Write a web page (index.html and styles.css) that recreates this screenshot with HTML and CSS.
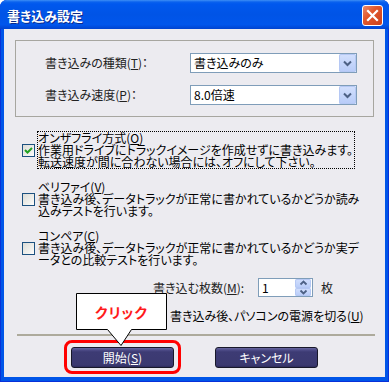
FILE: index.html
```html
<!DOCTYPE html>
<html lang="ja">
<head>
<meta charset="utf-8">
<title>書き込み設定</title>
<link rel="stylesheet" href="styles.css">
</head>
<body>
<div class="window">
  <div class="titlebar">
    <span class="title">書き込み設定</span>
    <span class="close"><svg width="13" height="13" viewBox="0 0 13 13"><path d="M2 2 L11 11 M11 2 L2 11" stroke="#fff" stroke-width="2.2" stroke-linecap="square"/></svg></span>
  </div>
  <div class="client">
    <div class="group">
      <span class="label">書き込みの種類(<u>T</u>)：</span>
      <div class="combo"><span class="value">書き込みのみ</span><span class="drop"><svg width="17" height="18" viewBox="0 0 17 18"><path d="M5 7.5 L8.5 11 L12 7.5" fill="none" stroke="#4D6185" stroke-width="2"/></svg></span></div>
      <span class="label">書き込み速度(<u>P</u>)：</span>
      <div class="combo"><span class="value">8.0倍速</span><span class="drop"><svg width="17" height="18" viewBox="0 0 17 18"><path d="M5 7.5 L8.5 11 L12 7.5" fill="none" stroke="#4D6185" stroke-width="2"/></svg></span></div>
    </div>

    <div class="options">
      <div class="option">
        <span class="check"><svg width="11" height="11" viewBox="0 0 11 11"><path d="M2 5 L4.5 7.5 L9 3" fill="none" stroke="#21A121" stroke-width="2"/></svg></span>
        <div class="desc focus">
          <div>オンザフライ方式(<u>O</u>)</div>
          <div>作業用ドライブにトラックイメージを作成せずに書き込みます。</div>
          <div>転送速度が間に合わない場合には、オフにして下さい。</div>
        </div>
      </div>
      <div class="option">
        <span class="check"></span>
        <div class="desc">
          <div>ベリファイ(<u>V</u>)</div>
          <div>書き込み後、データトラックが正常に書かれているかどうか読み</div>
          <div>込みテストを行います。</div>
        </div>
      </div>
      <div class="option">
        <span class="check"></span>
        <div class="desc">
          <div>コンペア(<u>C</u>)</div>
          <div>書き込み後、データトラックが正常に書かれているかどうか実デ</div>
          <div>ータとの比較テストを行います。</div>
        </div>
      </div>
    </div>

    <div class="count-row">
      <span class="count-label">書き込む枚数(<u>M</u>):</span>
      <div class="spin">
        <span class="spin-value">1</span>
        <span class="spin-btns">
          <span class="spin-btn"><svg width="15" height="8" viewBox="0 0 15 8"><path d="M4.5 5.5 L7.5 2.5 L10.5 5.5" fill="none" stroke="#4D6185" stroke-width="1.8"/></svg></span>
          <span class="spin-btn"><svg width="15" height="8" viewBox="0 0 15 8"><path d="M4.5 2.5 L7.5 5.5 L10.5 2.5" fill="none" stroke="#4D6185" stroke-width="1.8"/></svg></span>
        </span>
      </div>
      <span class="unit">枚</span>
    </div>

    <div class="shutdown-row">
      <span class="check"></span>
      <span>書き込み後、パソコンの電源を切る(<u>U</u>)</span>
    </div>

    <div class="sep"></div>

    <div class="buttons">
      <button class="btn">開始(<u>S</u>)</button>
      <button class="btn">キャンセル</button>
    </div>

    <div class="highlight"></div>
    <div class="callout">
      <svg width="92" height="54" viewBox="0 0 92 54"><path d="M0.5 0.5 H90.5 V36.5 H55.5 L45 52.5 L31.5 36.5 H0.5 Z" fill="#fff" stroke="#000" stroke-width="1"/></svg>
      <span class="callout-text">クリック</span>
    </div>
  </div>
</div>
</body>
</html>
```

FILE: styles.css
```css
* { box-sizing: border-box; }
html, body { margin: 0; padding: 0; }
body {
  width: 389px;
  height: 382px;
  overflow: hidden;
  background: #fff;
  font-family: "Noto Sans CJK JP", "Noto Sans", sans-serif;
  font-size: 12px;
  font-feature-settings: "palt" 1;
  color: #000;
}
u { text-decoration: underline; text-underline-offset: 1px; }

.window {
  width: 389px;
  height: 382px;
  display: flex;
  flex-direction: column;
  background: #0055E8;
  border-radius: 7px 7px 0 0;
  box-shadow: inset 0 0 0 1px #0831D9;
}

.titlebar {
  height: 29px;
  flex: none;
  display: flex;
  align-items: center;
  justify-content: space-between;
  padding: 0 6px 0 7px;
  border-radius: 7px 7px 0 0;
  background: linear-gradient(to bottom, #3D8FF5 0, #0A62EE 2px, #0058EE 4px, #0054E6 50%, #0056EC 85%, #0043CF 100%);
}
.title {
  color: #fff;
  font-weight: bold;
  font-size: 13px;
  line-height: 1;
  text-shadow: 1px 1px 0 #0B2A8C;
  margin-top: 1px;
}
.close {
  width: 21px;
  height: 21px;
  display: flex;
  align-items: center;
  justify-content: center;
  border: 1px solid #fff;
  border-radius: 3px;
  background: linear-gradient(135deg, #E98B6C 0, #E2572C 40%, #C9401C 100%);
  margin-top: 1px;
}

.client {
  position: relative;
  flex: 1;
  margin: 0 4px 5px 4px;
  background: #ECEBF0;
  padding-top: 11px;
}

.group {
  margin-left: 11px;
  width: 359px;
  border: 1px solid #A7A6A0;
  padding: 12px 0 11px 29px;
  display: grid;
  grid-template-columns: 145px 167px;
  row-gap: 12px;
  align-items: center;
}
.label { color: #222; line-height: 20px; white-space: nowrap; }
.combo {
  height: 20px;
  border: 1px solid #7F9DB9;
  background: #fff;
  display: flex;
  align-items: center;
  justify-content: space-between;
  padding-left: 3px;
}
.combo .value { line-height: 18px; }
.drop {
  width: 17px;
  height: 18px;
  border-radius: 2px;
  background: linear-gradient(to bottom, #D3E0FD, #B7CBF8);
  box-shadow: inset 0 0 0 1px #B5C8F4;
  display: flex;
}

.options {
  margin-top: 14px;
  padding-left: 18px;
  display: flex;
  flex-direction: column;
  gap: 11px;
}
.option { display: flex; align-items: center; }
.check {
  width: 13px;
  height: 13px;
  flex: none;
  border: 1px solid #1C5180;
  background: linear-gradient(135deg, #DCDCD7 0, #F2F2EF 70%, #fff 100%);
  margin-right: 2px;
  display: flex;
  align-items: center;
  justify-content: center;
}
.desc {
  border: 1px dotted transparent;
  line-height: 12px;
  white-space: nowrap;
  padding-right: 1px;
}
.desc > div { height: 12px; }
.desc.focus { border-color: #000; }

.count-row {
  margin-top: 11px;
  padding-left: 149px;
  height: 19px;
  display: flex;
  align-items: center;
}
.count-label { width: 105px; color: #222; white-space: nowrap; }
.spin {
  width: 55px;
  height: 19px;
  border: 1px solid #7F9DB9;
  background: #fff;
  display: flex;
  justify-content: space-between;
  padding: 0 1px 0 3px;
}
.spin-value { line-height: 17px; }
.spin-btns { display: flex; flex-direction: column; width: 16px; }
.spin-btn {
  height: 8.5px;
  display: flex;
  align-items: center;
  justify-content: center;
  border-radius: 2px;
  background: linear-gradient(to bottom, #D3E0FD, #B7CBF8);
  box-shadow: inset 0 0 0 1px #B5C8F4;
  overflow: hidden;
}
.unit { margin-left: 8px; color: #222; }

.shutdown-row {
  margin-top: 12px;
  padding-left: 149px;
  height: 13px;
  display: flex;
  align-items: center;
  line-height: 13px;
  white-space: nowrap;
}
.shutdown-row .check { margin-right: 4px; }

.sep {
  margin: 12px 0 0 13px;
  width: 358px;
  height: 2px;
  background: #ADAA9C;
}

.buttons {
  margin-top: 11px;
  padding-left: 67px;
  display: flex;
  gap: 41px;
}
.btn {
  width: 103px;
  height: 21px;
  padding: 0;
  border: 1px solid #18182A;
  border-radius: 3px;
  background: linear-gradient(to bottom, #6866A0 0, #4E4C88 2px, #3D3B74 4px, #3B3970 90%, #2E2C5C 100%);
  color: #fff;
  font-family: inherit;
  font-size: 12px;
  font-feature-settings: "palt" 1;
  line-height: 19px;
}

.highlight {
  position: absolute;
  left: 60px;
  top: 311px;
  width: 117px;
  height: 34px;
  border: 3px solid #FF0000;
  border-radius: 8px;
}
.callout {
  position: absolute;
  left: 72px;
  top: 264px;
  width: 92px;
  height: 54px;
}
.callout svg { display: block; }
.callout-text {
  position: absolute;
  left: 0;
  top: 10px;
  width: 91px;
  text-align: center;
  color: #FF1A1A;
  font-weight: bold;
  font-size: 14px;
  line-height: 18px;
  letter-spacing: 1px;
}
```
